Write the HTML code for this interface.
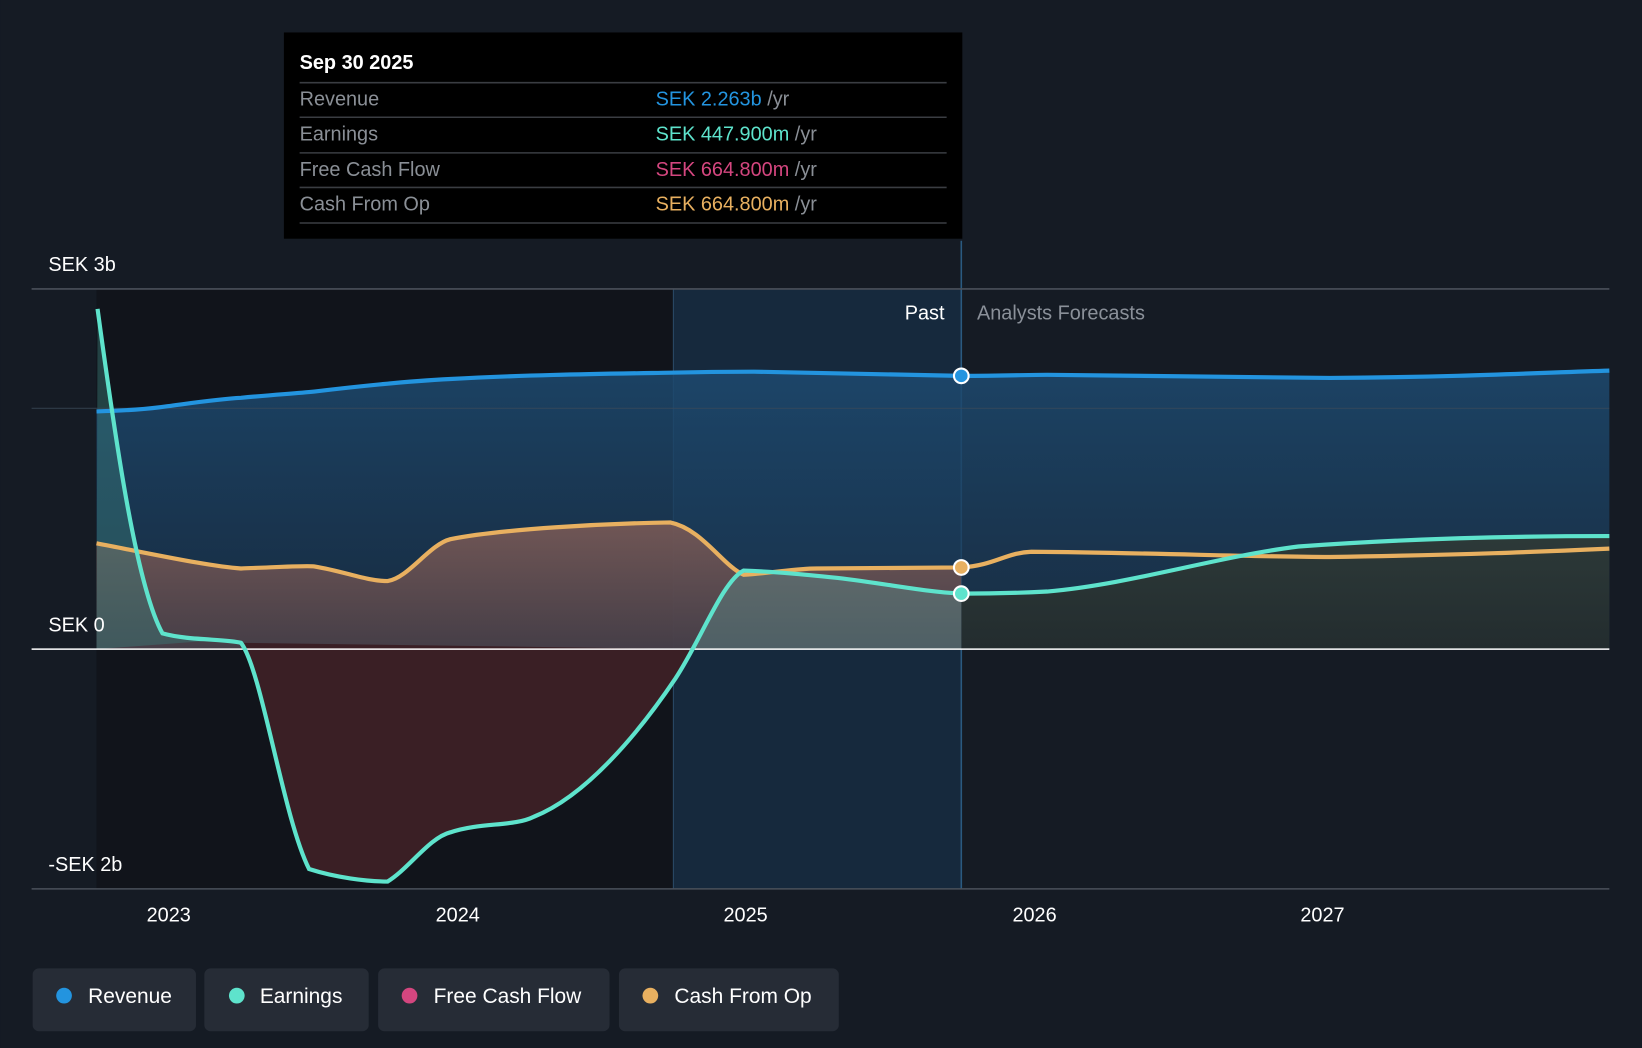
<!DOCTYPE html>
<html><head><meta charset="utf-8"><style>
html,body{margin:0;padding:0;background:#151b24;width:1642px;height:1048px;overflow:hidden}
svg{display:block}
text{font-family:"Liberation Sans",sans-serif}
</style></head><body>
<svg width="1642" height="1048" viewBox="0 0 1568 1001" xmlns="http://www.w3.org/2000/svg">
<defs>
<linearGradient id="rev" x1="0" y1="0" x2="0" y2="1"><stop offset="0" stop-color="#1d4a70" stop-opacity="0.85"/><stop offset="1" stop-color="#1a3550" stop-opacity="0.7"/></linearGradient>
<linearGradient id="cop" x1="0" y1="0" x2="0" y2="1"><stop offset="0" stop-color="#7a5a56" stop-opacity="0.9"/><stop offset="1" stop-color="#4a4048" stop-opacity="0.9"/></linearGradient>
<linearGradient id="ear" x1="0" y1="0" x2="0" y2="1"><stop offset="0" stop-color="#3a7a78" stop-opacity="0.7"/><stop offset="1" stop-color="#5a6a6a" stop-opacity="0.6"/></linearGradient>
<linearGradient id="fc" x1="0" y1="0" x2="0" y2="1"><stop offset="0" stop-color="#2f3a36" stop-opacity="0.9"/><stop offset="1" stop-color="#242c2c" stop-opacity="0.9"/></linearGradient>
</defs>
<rect width="1568" height="1001" fill="#151b24"/>
<rect x="92" y="276" width="551" height="573" fill="#11141b"/>
<rect x="643" y="276" width="275" height="573" fill="#16293d"/>
<line x1="643" y1="276" x2="643" y2="849" stroke="#2a4a66" stroke-width="1"/>
<line x1="918" y1="230" x2="918" y2="849" stroke="#2a5a80" stroke-width="1.5"/>
<!-- revenue fill -->
<path d="M92,393 C120,392 140,391 160,388 C190,384 210,381 230,380 C260,377 280,376 300,374 C350,368 390,364 430,362 C500,358 580,357 640,356 C680,355 700,355 720,355 C800,356 860,358 918,359 C960,359 980,358 1000,358 C1100,359 1200,361 1270,361 C1400,360 1470,356 1537,354 L1537,620 L92,620 Z" fill="url(#rev)"/>
<!-- forecast lower fill -->
<path d="M918,567 C960,567 980,566 1000,565 C1080,558 1160,532 1240,522 C1350,514 1450,512 1537,512 L1537,620 L918,620 Z" fill="url(#fc)"/>
<!-- cash op fill -->
<path d="M92,519 C150,530 200,541 230,543 C260,542 290,540 300,541 C330,546 350,555 370,555 C390,552 410,520 430,515 C480,505 580,500 640,499 C670,505 690,540 710,549 C740,547 760,543 780,543 L918,542 L918,620 L92,620 Z" fill="url(#cop)"/>
<!-- earnings negative fill -->
<path d="M230,614 C250,640 270,780 295,830 C320,838 350,842 370,842 C390,830 410,800 430,795 C460,785 490,790 510,780 C560,760 610,700 645,648 L662,620 Z" fill="#3a1f25"/>
<!-- earnings positive fill -->
<path d="M93,295 C110,420 130,560 155,605 L200,612 L92,620 Z" fill="#3a7a78" fill-opacity="0.45"/>
<path d="M662,620 C680,590 695,555 710,545 C740,546 770,549 800,552 C850,558 880,565 918,567 L918,620 Z" fill="#5a8a8a" fill-opacity="0.45"/>
<!-- grid -->
<line x1="30" y1="276" x2="1537" y2="276" stroke="#4a505a" stroke-width="1.5"/>
<line x1="30" y1="390" x2="1537" y2="390" stroke="#3a4a5a" stroke-width="1" opacity="0.7"/>
<line x1="30" y1="620" x2="1537" y2="620" stroke="#ffffff" stroke-width="1.5"/>
<line x1="30" y1="849" x2="1537" y2="849" stroke="#4a505a" stroke-width="1.5"/>
<!-- lines -->
<path d="M92,393 C120,392 140,391 160,388 C190,384 210,381 230,380 C260,377 280,376 300,374 C350,368 390,364 430,362 C500,358 580,357 640,356 C680,355 700,355 720,355 C800,356 860,358 918,359 C960,359 980,358 1000,358 C1100,359 1200,361 1270,361 C1400,360 1470,356 1537,354" fill="none" stroke="#2394df" stroke-width="4"/>
<path d="M92,519 C150,530 200,541 230,543 C260,542 290,540 300,541 C330,546 350,555 370,555 C390,552 410,520 430,515 C480,505 580,500 640,499 C670,505 690,540 710,549 C740,547 760,543 780,543 L918,542 C950,540 960,528 985,527 C1100,528 1200,532 1270,532 C1400,530 1470,527 1537,524" fill="none" stroke="#e8b060" stroke-width="4"/>
<path d="M93,295 C110,420 130,560 155,605 C180,612 215,610 230,614 C250,640 270,780 295,830 C320,838 350,842 370,842 C390,830 410,800 430,795 C460,785 490,790 510,780 C560,760 610,700 645,648 C670,610 690,555 710,545 C740,546 770,549 800,552 C850,558 880,565 918,567 C960,567 980,566 1000,565 C1080,558 1160,532 1240,522 C1350,514 1450,512 1537,512" fill="none" stroke="#5ee3cc" stroke-width="4"/>
<circle cx="918" cy="359" r="7" fill="#2394df" stroke="#fff" stroke-width="2"/>
<circle cx="918" cy="542" r="7" fill="#e8b060" stroke="#fff" stroke-width="2"/>
<circle cx="918" cy="567" r="7" fill="#5ee3cc" stroke="#fff" stroke-width="2"/>
<!-- labels -->
<text x="46" y="259" fill="#fff" font-size="19">SEK 3b</text>
<text x="46" y="603" fill="#fff" font-size="19">SEK 0</text>
<text x="46" y="832" fill="#fff" font-size="19">-SEK 2b</text>
<text x="902" y="305" fill="#fff" font-size="19" text-anchor="end">Past</text>
<text x="933" y="305" fill="#8a9099" font-size="19">Analysts Forecasts</text>
<g fill="#fff" font-size="19" text-anchor="middle">
<text x="161" y="880">2023</text><text x="437" y="880">2024</text><text x="712" y="880">2025</text><text x="988" y="880">2026</text><text x="1263" y="880">2027</text>
</g>
<!-- tooltip -->
<rect x="271" y="31" width="648" height="197" fill="#000"/>
<text x="286" y="66" fill="#fff" font-size="19" font-weight="bold">Sep 30 2025</text>
<g stroke="#3a3d42" stroke-width="1.5"><line x1="286" y1="79" x2="904" y2="79"/><line x1="286" y1="112" x2="904" y2="112"/><line x1="286" y1="146" x2="904" y2="146"/><line x1="286" y1="179" x2="904" y2="179"/><line x1="286" y1="213" x2="904" y2="213"/></g>
<g font-size="19" fill="#8a8f96">
<text x="286" y="101">Revenue</text><text x="286" y="134">Earnings</text><text x="286" y="168">Free Cash Flow</text><text x="286" y="201">Cash From Op</text>
</g>
<g font-size="19">
<text x="626" y="101"><tspan fill="#2394df">SEK 2.263b</tspan><tspan fill="#8a8f96"> /yr</tspan></text>
<text x="626" y="134"><tspan fill="#5ee3cc">SEK 447.900m</tspan><tspan fill="#8a8f96"> /yr</tspan></text>
<text x="626" y="168"><tspan fill="#d4467f">SEK 664.800m</tspan><tspan fill="#8a8f96"> /yr</tspan></text>
<text x="626" y="201"><tspan fill="#e8b060">SEK 664.800m</tspan><tspan fill="#8a8f96"> /yr</tspan></text>
</g>
<!-- legend -->
<g fill="#262c36">
<rect x="31" y="925" width="156" height="60" rx="6"/><rect x="195" y="925" width="157" height="60" rx="6"/><rect x="361" y="925" width="221" height="60" rx="6"/><rect x="591" y="925" width="210" height="60" rx="6"/>
</g>
<circle cx="61" cy="951" r="7.5" fill="#2394df"/><circle cx="226" cy="951" r="7.5" fill="#5ee3cc"/><circle cx="391" cy="951" r="7.5" fill="#d4467f"/><circle cx="621" cy="951" r="7.5" fill="#e8b060"/>
<g fill="#fff" font-size="20">
<text x="84" y="958">Revenue</text><text x="248" y="958">Earnings</text><text x="414" y="958">Free Cash Flow</text><text x="644" y="958">Cash From Op</text>
</g>
</svg>
</body></html>
